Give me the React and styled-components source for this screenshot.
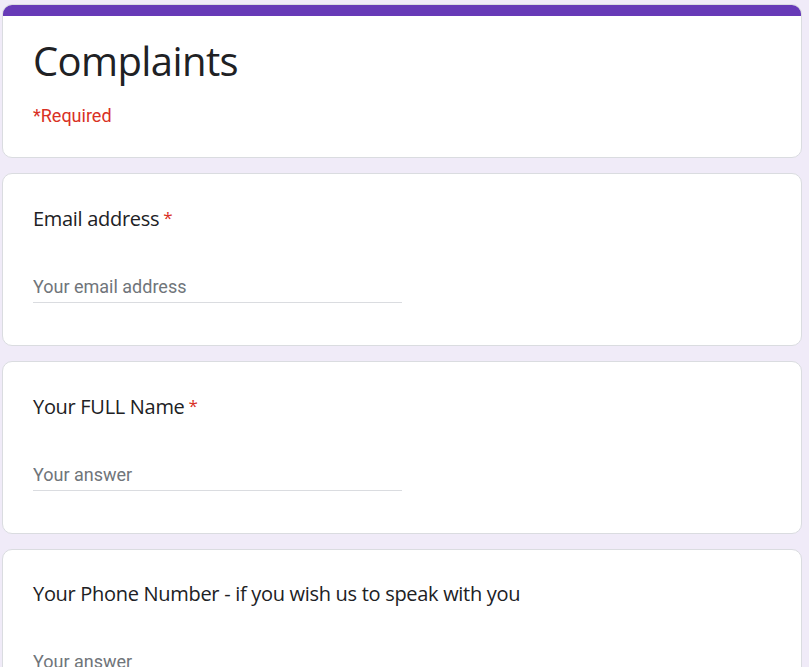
import React from "react";
import styled, { createGlobalStyle } from "styled-components";

const GlobalStyle = createGlobalStyle`
  html, body {
    margin: 0;
    padding: 0;
    background: #f0ebf8;
  }
  body {
    font-family: Roboto, "Liberation Sans", sans-serif;
  }
`;

const Page = styled.main`
  width: 800px;
  padding: 4px 0 0 2px;
  display: flex;
  flex-direction: column;
  gap: 15px;
`;

const Card = styled.section`
  background: #fff;
  border: 1px solid #dadce0;
  border-radius: 10px;
  overflow: hidden;
  display: flex;
  flex-direction: column;
`;

const HeaderBar = styled.div`
  height: 12px;
  background: #673ab7;
  margin: -1px -1px 0;
`;

const HeaderBody = styled.div`
  padding: 21px 30px 29px;
  display: flex;
  flex-direction: column;
`;

const Title = styled.h1`
  margin: 0;
  font-family: "Open Sans", sans-serif;
  font-weight: 400;
  font-size: 40px;
  letter-spacing: -0.6px;
  line-height: 48px;
  color: #202124;
`;

const Required = styled.div`
  margin-top: 19px;
  font-family: Roboto, sans-serif;
  font-size: 18px;
  line-height: 24px;
  color: #d93025;
`;

const QuestionBody = styled.div`
  padding: 29px 30px 42px;
  display: flex;
  flex-direction: column;
`;

const Label = styled.div`
  font-family: "Open Sans", sans-serif;
  font-size: 20px;
  letter-spacing: -0.3px;
  line-height: 30px;
  color: #202124;
`;

const Star = styled.span`
  color: #d93025;
  margin-left: 4px;
  font-size: 17px;
  vertical-align: 2px;
`;

const Input = styled.input`
  margin-top: 36px;
  width: 369px;
  height: 32px;
  box-sizing: content-box;
  padding: 0;
  border: none;
  border-bottom: 1px solid #dadce0;
  outline: none;
  background: transparent;
  font-family: Roboto, sans-serif;
  font-size: 18px;
  color: #202124;
  &::placeholder {
    color: #70757a;
  }
`;

const questions = [
  { label: "Email address", required: true, placeholder: "Your email address" },
  { label: "Your FULL Name", required: true, placeholder: "Your answer" },
  { label: "Your Phone Number - if you wish us to speak with you", required: false, placeholder: "Your answer" },
];

export default function App() {
  return (
    <>
      <GlobalStyle />
      <Page>
        <Card>
          <HeaderBar />
          <HeaderBody>
            <Title>Complaints</Title>
            <Required>*Required</Required>
          </HeaderBody>
        </Card>
        {questions.map((q) => (
          <Card key={q.label}>
            <QuestionBody>
              <Label>
                {q.label}
                {q.required && <Star>*</Star>}
              </Label>
              <Input type="text" placeholder={q.placeholder} />
            </QuestionBody>
          </Card>
        ))}
      </Page>
    </>
  );
}
